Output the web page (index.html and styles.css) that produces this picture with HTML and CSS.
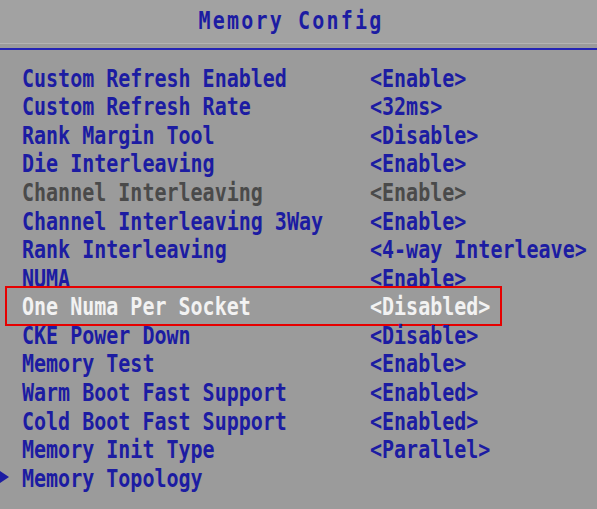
FILE: index.html
```html
<!DOCTYPE html>
<html>
<head>
<meta charset="utf-8">
<link rel="stylesheet" href="styles.css">
</head>
<body>
<div class="screen">
  <header class="head"><span class="title">Memory Config</span></header>
  <div class="sep"></div>
  <div class="list">
    <div class="row"><span class="k">Custom Refresh Enabled</span><span class="v">&lt;Enable&gt;</span></div>
    <div class="row"><span class="k">Custom Refresh Rate</span><span class="v">&lt;32ms&gt;</span></div>
    <div class="row"><span class="k">Rank Margin Tool</span><span class="v">&lt;Disable&gt;</span></div>
    <div class="row"><span class="k">Die Interleaving</span><span class="v">&lt;Enable&gt;</span></div>
    <div class="row dim"><span class="k">Channel Interleaving</span><span class="v">&lt;Enable&gt;</span></div>
    <div class="row"><span class="k">Channel Interleaving 3Way</span><span class="v">&lt;Enable&gt;</span></div>
    <div class="row"><span class="k">Rank Interleaving</span><span class="v">&lt;4-way Interleave&gt;</span></div>
    <div class="row"><span class="k">NUMA</span><span class="v">&lt;Enable&gt;</span></div>
    <div class="row sel"><span class="k">One Numa Per Socket</span><span class="v">&lt;Disabled&gt;</span></div>
    <div class="row"><span class="k">CKE Power Down</span><span class="v">&lt;Disable&gt;</span></div>
    <div class="row"><span class="k">Memory Test</span><span class="v">&lt;Enable&gt;</span></div>
    <div class="row"><span class="k">Warm Boot Fast Support</span><span class="v">&lt;Enabled&gt;</span></div>
    <div class="row"><span class="k">Cold Boot Fast Support</span><span class="v">&lt;Enabled&gt;</span></div>
    <div class="row"><span class="k">Memory Init Type</span><span class="v">&lt;Parallel&gt;</span></div>
    <div class="row sub"><span class="k">Memory Topology</span><span class="v"></span></div>
  </div>
</div>
</body>
</html>
```
FILE: styles.css
```css
html, body {
  margin: 0;
  padding: 0;
  background: #9b9b9b;
}
.screen {
  width: 597px;
  height: 509px;
  overflow: hidden;
  background: #9b9b9b;
  font-family: "DejaVu Sans Mono", "Liberation Mono", monospace;
  font-weight: bold;
  font-size: 20px;
  color: #1c1ca2;
}
.head {
  height: 44px;
  background: #a2a2a2;
  border-bottom: 1px solid #b4b4b4;
  display: flex;
  align-items: center;
  justify-content: center;
  padding-right: 15px;
  box-sizing: border-box;
}
.title {
  display: inline-block;
  letter-spacing: 2.2px;
  transform: scaleY(1.25);
  margin-top: -3px;
}
.sep {
  height: 2px;
  margin-top: 4px;
  background: #2424b4;
}
.list {
  padding-top: 13.5px;
  display: grid;
  grid-auto-rows: 28.57px;
}
.row {
  position: relative;
  display: grid;
  grid-template-columns: 348px 1fr;
  align-items: center;
  padding-left: 22px;
  line-height: 28px;
  white-space: nowrap;
}
.k, .v {
  display: inline-block;
  transform: scaleY(1.25);
}
.dim { color: #4a4a4a; }
.sel { color: #f2f2f2; }
.sel::after {
  content: "";
  position: absolute;
  left: 5px;
  width: 497px;
  top: -6px;
  bottom: -5px;
  border: 2px solid #e60000;
  box-sizing: border-box;
}
.sub::before {
  content: "";
  position: absolute;
  left: 0;
  top: 8px;
  border-left: 9px solid #1c1ca2;
  border-top: 6px solid transparent;
  border-bottom: 6px solid transparent;
}
```
